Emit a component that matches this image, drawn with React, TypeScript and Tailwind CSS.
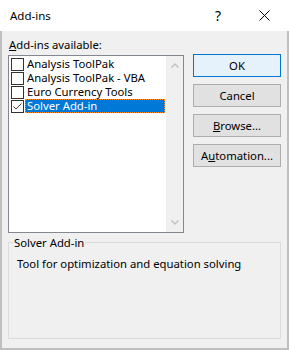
import React from "react";

const font = { fontFamily: '"Segoe UI", "Noto Sans", "Open Sans", sans-serif' };

function Check({ checked }: { checked?: boolean }) {
  return (
    <div className="w-[13px] h-[13px] border border-[#333333] bg-white shrink-0 relative">
      {checked && (
        <svg width="11" height="11" viewBox="0 0 11 11" className="absolute left-0 top-0">
          <path d="M1.5 5.5 L4 8 L9.5 2.5" fill="none" stroke="#444444" strokeWidth="1" />
        </svg>
      )}
    </div>
  );
}

function Item({ label, checked, selected }: { label: string; checked?: boolean; selected?: boolean }) {
  return (
    <div className="h-[14px] flex items-center pl-[2px]">
      <Check checked={checked} />
      <div
        className={
          selected
            ? "ml-[1px] h-[14px] w-[140px] bg-[#0078d7] text-white pl-[1px] flex items-center border border-dotted border-[#ff8a1f]"
            : "ml-[1px] h-[14px] pl-[2px] flex items-center text-black"
        }
      >
        <span className="leading-[12px] whitespace-nowrap">{label}</span>
      </div>
    </div>
  );
}

function Btn({ children, primary }: { children: React.ReactNode; primary?: boolean }) {
  return (
    <div
      className={
        primary
          ? "h-[23px] w-[88px] border border-[#0078d7] bg-[#e5f1fb] flex items-center justify-center text-black"
          : "h-[23px] w-[88px] border border-[#adadad] bg-[#e1e1e1] flex items-center justify-center text-black"
      }
    >
      {children}
    </div>
  );
}

export default function App() {
  return (
    <div className="w-[289px] h-[350px] text-[11.3px] leading-[15px] text-black" style={font}>
      <div className="h-[31px] bg-white flex items-center relative">
        <span className="pl-[10px] text-[11.5px]">Add-ins</span>
        <span className="absolute left-[215px] top-[7px] text-[14px] leading-[18px]">?</span>
        <svg className="absolute left-[259px] top-[10px]" width="11" height="11" viewBox="0 0 11 11">
          <path d="M0.5 0.5 L10.5 10.5 M10.5 0.5 L0.5 10.5" stroke="#000" strokeWidth="1" />
        </svg>
      </div>
      <div className="h-[319px] bg-[#f0f0f0] border-x-2 border-b-2 border-[#bfbfbf] pl-[6px]">
        <div className="flex">
          <div className="w-[176px] flex flex-col">
            <div className="mt-[6px] h-[15px] ml-[1px] mb-[3px]">
              <span className="underline">A</span>dd-ins available:
            </div>
            <div className="h-[178px] border border-[#828790] bg-white flex">
              <div className="flex-1 pt-[1px] pl-0">
                <Item label="Analysis ToolPak" />
                <Item label="Analysis ToolPak - VBA" />
                <Item label="Euro Currency Tools" />
                <Item label="Solver Add-in" checked selected />
              </div>
              <div className="w-[17px] bg-[#f0f0f0] flex flex-col items-center justify-between py-[7px]">
                <svg width="8" height="5" viewBox="0 0 8 5">
                  <path d="M0.5 4.5 L4 1 L7.5 4.5" fill="none" stroke="#c2c2c2" strokeWidth="1.5" />
                </svg>
                <svg width="8" height="5" viewBox="0 0 8 5">
                  <path d="M0.5 0.5 L4 4 L7.5 0.5" fill="none" stroke="#c2c2c2" strokeWidth="1.5" />
                </svg>
              </div>
            </div>
          </div>
          <div className="ml-[9px] mt-[23px] flex flex-col gap-[7px]">
            <Btn primary>OK</Btn>
            <Btn>Cancel</Btn>
            <Btn>
              <span>
                <span className="underline">B</span>rowse...
              </span>
            </Btn>
            <Btn>
              <span>
                A<span className="underline">u</span>tomation...
              </span>
            </Btn>
          </div>
        </div>
        <div className="mt-[9px] w-[273px] h-[97px] border border-[#dcdcdc] relative">
          <span className="absolute left-[5px] top-[-8px] bg-[#f0f0f0] pr-[1px]">Solver Add-in</span>
          <div className="mt-[13px] ml-[8px]">Tool for optimization and equation solving</div>
        </div>
      </div>
    </div>
  );
}
